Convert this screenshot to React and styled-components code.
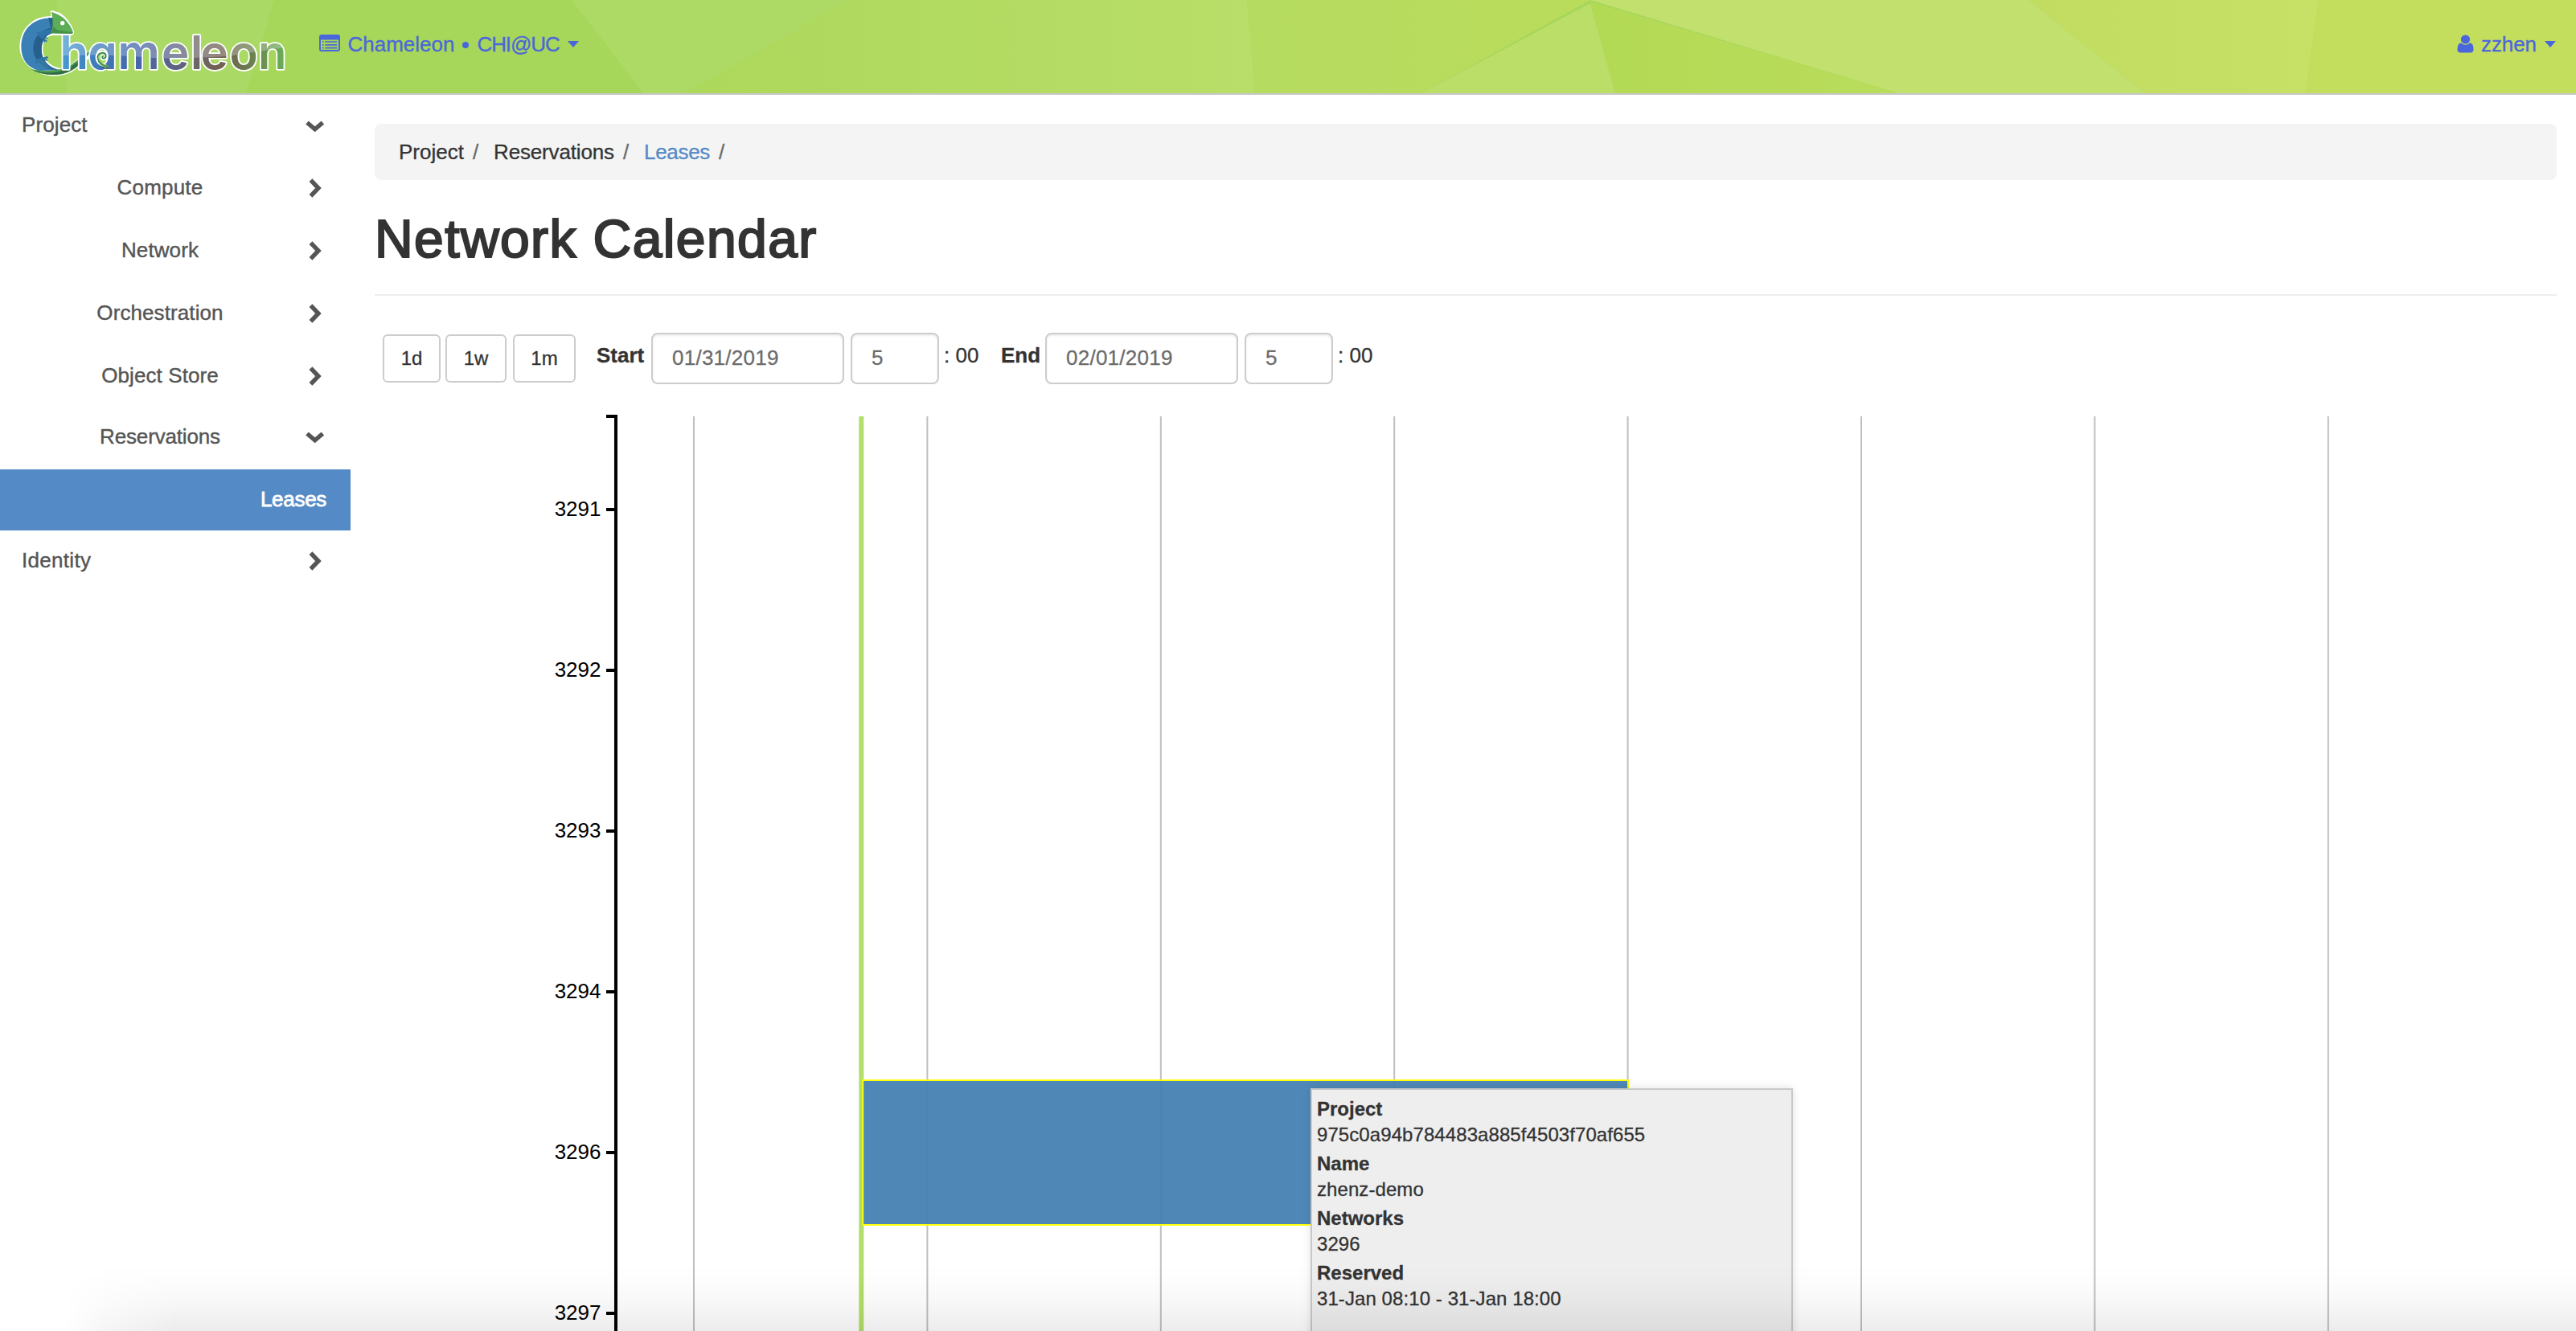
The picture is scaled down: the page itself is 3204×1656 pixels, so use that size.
import React from "react";
import styled, { createGlobalStyle } from "styled-components";

const GlobalStyle = createGlobalStyle`
  * { box-sizing: border-box; }
  html, body { margin: 0; padding: 0; background: #fff; }
  body {
    overflow: hidden;
    font-family: "Liberation Sans", Arial, sans-serif;
    font-size: 26px;
    color: #333;
    -webkit-text-stroke: 0.3px currentColor;
  }
`;

const Page = styled.div`
  position: relative;
  display: flex;
  flex-direction: column;
  width: 3204px;
  height: 1656px;
  overflow: hidden;
`;

const Header = styled.header`
  position: relative;
  display: flex;
  flex: none;
  justify-content: space-between;
  height: 118px;
  border-bottom: 2px solid #c8c8c8;
  color: #4a66dc;
`;

const HeaderArt = styled.svg`
  position: absolute;
  inset: 0;
  width: 3204px;
  height: 116px;
`;

const HeaderGroup = styled.div`
  position: relative;
  display: flex;
  align-items: flex-start;
`;

const LogoArt = styled.svg`
  display: block;
  width: 380px;
  height: 116px;
  -webkit-text-stroke: 0;
`;

const NavItem = styled.div`
  display: flex;
  align-items: flex-start;
  height: 30px;
  line-height: 30px;
  margin-top: 40px;
  margin-left: ${(p) => p.$left || 0}px;
  margin-right: ${(p) => p.$right || 0}px;
`;

const NavText = styled.span`
  width: ${(p) => p.$w}px;
  margin-left: ${(p) => p.$gap}px;
  letter-spacing: ${(p) => p.$ls || 0}px;
  white-space: nowrap;
`;

const NavIcon = styled.svg`
  display: block;
  flex: none;
  margin-top: 3px;
`;

const Bullet = styled.span`
  width: 8px;
  height: 8px;
  margin: 12px 1px 0 10px;
  border-radius: 50%;
  background: currentColor;
`;

const Caret = styled.span`
  width: 0;
  height: 0;
  margin: 11px 0 0 ${(p) => p.$gap}px;
  border: 7.5px solid transparent;
  border-top: 8.5px solid currentColor;
  border-bottom: 0;
`;

const Columns = styled.div`
  display: flex;
  flex: 1;
  min-height: 0;
`;

const Sidebar = styled.nav`
  flex: none;
  width: 436px;
`;

const SideRow = styled.div`
  display: grid;
  grid-template-columns: 398px 38px;
  height: 76px;
  margin-top: ${(p) => p.$gap || 0}px;
  line-height: 74px;
  color: ${(p) => (p.$active ? "#fff" : "#555")};
  background: ${(p) => (p.$active ? "#548ac5" : "transparent")};
`;

const SideLabel = styled.span`
  padding-left: ${(p) => (p.$align === "left" ? 27 : 0)}px;
  margin-right: ${(p) => (p.$align === "right" ? -8 : 0)}px;
  text-align: ${(p) => p.$align};
  letter-spacing: ${(p) => p.$ls || 0}px;
  -webkit-text-stroke: ${(p) => (p.$align === "right" ? 0.8 : 0.4)}px currentColor;
`;

const ChevronBox = styled.svg`
  display: block;
  width: 26px;
  height: 26px;
  margin: ${(p) => p.$top}px 0 0 -19px;
`;

const Main = styled.main`
  display: flex;
  flex-direction: column;
  width: 2768px;
  padding: 36px 24px 0 30px;
`;

const Breadcrumb = styled.ol`
  display: flex;
  flex: none;
  height: 70px;
  margin: 0;
  padding: 0 30px;
  list-style: none;
  line-height: 70px;
  border-radius: 8px;
  background: #f4f4f4;
`;

const Crumb = styled.li`
  display: flex;
  width: ${(p) => p.$w}px;
  letter-spacing: ${(p) => p.$ls || 0}px;
  color: ${(p) => (p.$active ? "#548ac5" : "#333")};
  &::after {
    content: "/";
    padding-left: 11px;
    color: #6a6a6a;
  }
`;

const Title = styled.h1`
  flex: none;
  height: 142px;
  margin: 0;
  padding-top: 33px;
  font-size: 66px;
  line-height: 80px;
  font-weight: 400;
  letter-spacing: 1.4px;
  -webkit-text-stroke: 2.2px #333;
`;

const Rule = styled.hr`
  flex: none;
  width: 100%;
  height: 2px;
  margin: 0;
  border: 0;
  background: #eee;
`;

const Controls = styled.form`
  display: flex;
  flex: none;
  align-items: flex-start;
  height: 134px;
  padding: 46px 0 0 10px;
`;

const RangeButton = styled.button`
  width: ${(p) => p.$w}px;
  height: 60px;
  margin: 2px ${(p) => p.$gap}px 0 0;
  padding: 0;
  border: 2px solid #ccc;
  border-radius: 6px;
  background: #fff;
  font: 24px/54px "Liberation Sans", Arial, sans-serif;
  color: #333;
`;

const Label = styled.label`
  width: ${(p) => p.$w}px;
  line-height: 57px;
  font-weight: 700;
`;

const Field = styled.input`
  width: ${(p) => p.$w}px;
  height: 64px;
  margin-right: 8px;
  padding: 0 24px 2px;
  border: 2px solid #ccc;
  border-radius: 8px;
  background: #fff;
  box-shadow: inset 0 2px 3px rgba(0, 0, 0, 0.075);
  font: 26px/58px "Liberation Sans", Arial, sans-serif;
  letter-spacing: 0.25px;
  color: #6c6c6c;
`;

const Minutes = styled.span`
  width: ${(p) => p.$w}px;
  margin-left: -2px;
  line-height: 57px;
`;

const Chart = styled.svg`
  display: block;
  flex: none;
  width: 2714px;
  height: 1154px;
  text { font: 26px "Liberation Sans", Arial, sans-serif; fill: #000; }
`;

const Tooltip = styled.dl`
  position: absolute;
  left: 1630px;
  top: 1354px;
  width: 600px;
  height: 340px;
  margin: 0;
  padding: 8px 6px;
  border: 2px solid #c8c8c8;
  background: #eee;
  box-shadow: 0 0 10px rgba(0, 0, 0, 0.12);
  font-size: 24px;
  line-height: 32px;
`;

const Term = styled.dt`
  margin-top: ${(p) => (p.$first ? 0 : 4)}px;
  font-weight: 700;
`;

const Detail = styled.dd`
  margin: 0;
  letter-spacing: 0.08px;
`;

const BottomShade = styled.div`
  position: absolute;
  left: 0;
  right: 0;
  bottom: 0;
  height: 84px;
  background: linear-gradient(rgba(0,0,0,0), rgba(0,0,0,0.008) 25%, rgba(0,0,0,0.03) 60%, rgba(0,0,0,0.075));
  mask-image: linear-gradient(90deg, transparent 80px, rgba(0,0,0,.5) 130px, #000 220px);
  pointer-events: none;
`;

const FACETS = [
  ["0,0 341,0 306,116 0,116", "#abd966"],
  ["0,0 70,0 84,116 0,116", "#a5d75f"],
  ["711,0 1056,0 852,116 800,116", "#add965"],
  ["1056,0 1551,0 1561,116 852,116", "url(#facetA)"],
  ["1551,0 1978,0 1768,116 1561,116", "url(#facetB)"],
  ["1978,4 1768,116 2009,116", "#bbde69"],
  ["1978,2 2009,116 2361,116", "url(#facetD)"],
  ["1978,0 2523,0 2668,116 2361,116", "#c2e06d"],
  ["2523,0 2884,0 2868,116 2668,116", "url(#facetC)"],
  ["2884,0 3204,0 3204,116 2868,116", "#c3de5c"],
];

function HeaderBackdrop() {
  return (
    <HeaderArt viewBox="0 0 3204 116" preserveAspectRatio="none">
      <defs>
        <linearGradient id="facetA">
          <stop offset="0" stopColor="#acd85b" />
          <stop offset="1" stopColor="#b9de69" />
        </linearGradient>
        <linearGradient id="facetB">
          <stop offset="0" stopColor="#b5db60" />
          <stop offset="1" stopColor="#badc5b" />
        </linearGradient>
        <linearGradient id="facetC">
          <stop offset="0" stopColor="#c1dc60" />
          <stop offset="1" stopColor="#c6e166" />
        </linearGradient>
        <linearGradient id="facetD">
          <stop offset="0" stopColor="#b3da54" />
          <stop offset="1" stopColor="#b9dc5c" />
        </linearGradient>
      </defs>
      <rect width="3204" height="116" fill="#a6d65a" />
      {FACETS.map(([points, fill]) => (
        <polygon key={points} points={points} fill={fill} />
      ))}
    </HeaderArt>
  );
}

const WORDMARK = {
  x: "74.5 109.5 146.5 201 237 249.5 285.5 321",
  y: "86.3",
  fontFamily: "Inter, Lato, sans-serif",
  fontWeight: 600,
  fontSize: 58,
  style: { fontFeatureSettings: '"cv11"' },
};

function Logo() {
  return (
    <LogoArt viewBox="0 0 380 116">
      <defs>
        <linearGradient id="word" gradientUnits="userSpaceOnUse" x1="77" y1="0" x2="354" y2="0">
          <stop offset="0" stopColor="#4799cf" />
          <stop offset="0.17" stopColor="#3d79b8" />
          <stop offset="0.33" stopColor="#4668ab" />
          <stop offset="0.5" stopColor="#5b6285" />
          <stop offset="0.61" stopColor="#6b6666" />
          <stop offset="0.7" stopColor="#745f55" />
          <stop offset="0.82" stopColor="#6b774e" />
          <stop offset="1" stopColor="#6aae56" />
        </linearGradient>
        <clipPath id="wordClip">
          <text {...WORDMARK}>hameleon</text>
        </clipPath>
      </defs>
      <g transform="scale(.33333)">
        <g fill="#fff" stroke="#fff" strokeWidth="10" strokeLinejoin="round">
          <path d="M197 65C120 62 78 115 78 175C78 228 125 270 185 278C220 281 245 276 268 262L232 260C185 256 155 225 155 185C155 150 170 130 197 126L262 127Q273 127 271 118Q255 75 222 53L193 44Z" />
          <path d="M250 258L290 226L338 192L344 200L296 243L262 266Z" />
        </g>
        <path d="M197 67C120 64 79 115 79 175C79 222 104 254 145 264L232 262C185 256 155 225 155 185C155 150 170 130 200 122Z" fill="#3a80b5" />
        <path d="M180 67L199 67L199 122C170 130 156 150 155 185C155 225 180 250 215 261L185 258C145 240 124 215 124 180C124 140 150 112 190 104Z" fill="#265f8c" />
        <path d="M145 120Q165 112 197 108L197 122Q165 130 158 145Q142 138 145 120Z" fill="#2e74aa" />
        <path d="M140 122Q145 138 163 143L166 156M163 143L176 142M163 146L174 154" fill="none" stroke="#2f72a6" strokeWidth="5" strokeLinecap="round" />
        <path d="M136 232Q145 216 162 218L176 214M162 220L174 224" fill="none" stroke="#2f72a6" strokeWidth="7" strokeLinecap="round" />
        <path d="M130 222Q155 215 168 232Q180 252 205 260L165 250Z" fill="#34789f" />
        <path d="M192 44Q218 52 236 66Q263 92 272 118Q273 126 264 126L190 124Q203 90 192 44Z" fill="#5bae56" />
        <path d="M201 98Q208 112 225 114Q250 119 272 120Q273 126 264 126L190 124Z" fill="#479047" />
        <circle cx="233" cy="86" r="8" fill="#fff" />
        <path d="M110 256Q140 266 175 264Q225 262 255 250L292 222Q318 198 345 186Q330 205 300 238Q275 266 235 276Q190 284 150 272Q128 266 110 256Z" fill="#4d9a50" />
        <path d="M122 262Q160 275 205 270Q240 266 265 250L298 228L290 244Q265 268 228 277Q185 283 150 273Q132 268 122 262Z" fill="#2f6e45" />
      </g>
      <text {...WORDMARK} fill="#fff" stroke="#fff" strokeWidth="3.6" strokeLinejoin="round">hameleon</text>
      <text {...WORDMARK} fill="url(#word)">hameleon</text>
      <path clipPath="url(#wordClip)" fill="#fff" opacity=".25" d="M60 30H370V57Q320 64 290 69Q230 74 190 72Q130 66 60 70Z" />
      <g transform="scale(.33333)" fill="none" strokeLinecap="round">
        <path d="M362 232Q378 258 404 258L400 240Q385 245 374 232Z" fill="#24384f" />
        <path d="M396 247Q362 240 361 212Q363 194 384 194Q400 197 398 212Q394 224 382 219Q376 211 385 208" stroke="#fff" strokeWidth="11" />
        <path d="M400 248Q366 240 364 213Q367 197 384 197Q397 200 395 212Q391 221 383 217Q379 211 385 209" stroke="#2f8250" strokeWidth="5" />
        <path d="M402 249Q380 246 370 230" stroke="#4c9a4a" strokeWidth="8" />
      </g>
    </LogoArt>
  );
}

function ListIcon() {
  return (
    <NavIcon width="26" height="22" viewBox="0 0 26 22">
      <path fill="currentColor" fillRule="evenodd" d="M3 0H23Q26 0 26 3V18Q26 21 23 21H3Q0 21 0 18V3Q0 0 3 0ZM2 6.5V18Q2 19 3 19H23Q24 19 24 18V6.5Z" />
      <path stroke="currentColor" strokeWidth="1.7" d="M3.8 9H5.6M7.3 9H22.3M3.8 12.8H5.6M7.3 12.8H22.3M3.8 16.6H5.6M7.3 16.6H22.3" />
    </NavIcon>
  );
}

function UserIcon() {
  return (
    <NavIcon width="21" height="23" viewBox="0 0 21 23">
      <circle cx="10.5" cy="6" r="5.6" fill="currentColor" />
      <path fill="currentColor" d="M5 10.2Q7.3 12.8 10.5 12.8T16 10.2Q20.5 10.5 20.5 18.5Q20.5 22.6 16.8 22.6H4.2Q.5 22.6 .5 18.5Q.5 10.5 5 10.2Z" />
    </NavIcon>
  );
}

function Chevron({ open, top }) {
  return (
    <ChevronBox $top={top} viewBox="0 0 26 26">
      <path
        d={open ? "M3 8.5L12.7 16.7L22.4 8.5" : "M7.5 3.2L17 13L7.5 22.8"}
        fill="none"
        stroke="#555"
        strokeWidth="5.4"
      />
    </ChevronBox>
  );
}

const MENU = [
  { label: "Project", align: "left", open: true, top: 26, ls: 0.1 },
  { label: "Compute", align: "center", gap: 2, top: 25, ls: 0.2 },
  { label: "Network", align: "center", gap: 2, top: 25, ls: 0.1 },
  { label: "Orchestration", align: "center", gap: 2, top: 25, ls: 0.1 },
  { label: "Object Store", align: "center", gap: 2, top: 25, ls: 0.1 },
  { label: "Reservations", align: "center", open: true, top: 25, ls: -0.15 },
  { label: "Leases", align: "right", active: true, gap: 2, ls: -0.3 },
  { label: "Identity", align: "left", top: 25, ls: 0.3 },
];

const TICKS = [
  ["3291", 634],
  ["3292", 834],
  ["3293", 1034],
  ["3294", 1234],
  ["3296", 1434],
  ["3297", 1634],
];

const GRID = Array.from({ length: 8 }, (_, i) => 863 + i * 290.4);

const DETAILS = [
  ["Project", "975c0a94b784483a885f4503f70af655"],
  ["Name", "zhenz-demo"],
  ["Networks", "3296"],
  ["Reserved", "31-Jan 08:10 - 31-Jan 18:00"],
];

function Calendar() {
  return (
    <Chart viewBox="466 502 2714 1154">
      {GRID.map((x) => (
        <line key={x} x1={x} x2={x} y1="518" y2="1660" stroke="#bfbfbf" strokeWidth="2" />
      ))}
      <line x1="1071.3" x2="1071.3" y1="518" y2="1660" stroke="#b3de69" strokeWidth="6" />
      <rect x="1073.2" y="1344" width="951.8" height="180" fill="#4682b4" stroke="#ff0" strokeWidth="2" opacity=".95" />
      <path d="M754 518H766V1660" fill="none" stroke="#000" strokeWidth="4" />
      {TICKS.map(([name, y]) => (
        <g key={name}>
          <line x1="754" x2="766" y1={y} y2={y} stroke="#000" strokeWidth="4" />
          <text x="747.5" y={y + 8} textAnchor="end">{name}</text>
        </g>
      ))}
    </Chart>
  );
}

export default function App() {
  return (
    <Page>
      <GlobalStyle />
      <Header>
        <HeaderBackdrop />
        <HeaderGroup>
          <Logo />
          <NavItem $left={17}>
            <ListIcon />
            <NavText $gap={9.5} $w={132}>Chameleon</NavText>
            <Bullet />
            <NavText $gap={10} $w={103} $ls={-1.1}>CHI@UC</NavText>
            <Caret $gap={9.5} />
          </NavItem>
        </HeaderGroup>
        <HeaderGroup>
          <NavItem $right={25}>
            <UserIcon />
            <NavText $gap={9} $w={69} $ls={-0.1}>zzhen</NavText>
            <Caret $gap={10} />
          </NavItem>
        </HeaderGroup>
      </Header>
      <Columns>
        <Sidebar>
          {MENU.map((m) => (
            <SideRow key={m.label} $active={m.active} $gap={m.gap}>
              <SideLabel $align={m.align} $ls={m.ls}>{m.label}</SideLabel>
              {!m.active && <Chevron open={m.open} top={m.top} />}
            </SideRow>
          ))}
        </Sidebar>
        <Main>
          <Breadcrumb>
            <Crumb $w={118}>Project</Crumb>
            <Crumb $w={187} $ls={-0.15}>Reservations</Crumb>
            <Crumb $w={100} $active $ls={-0.3}>Leases</Crumb>
          </Breadcrumb>
          <Title>Network Calendar</Title>
          <Rule />
          <Controls>
            <RangeButton type="button" $w={72} $gap={6}>1d</RangeButton>
            <RangeButton type="button" $w={76} $gap={8}>1w</RangeButton>
            <RangeButton type="button" $w={78} $gap={26}>1m</RangeButton>
            <Label $w={68}>Start</Label>
            <Field $w={240} defaultValue="01/31/2019" />
            <Field $w={110} defaultValue="5" />
            <Minutes $w={71}>: 00</Minutes>
            <Label $w={55}>End</Label>
            <Field $w={240} defaultValue="02/01/2019" />
            <Field $w={110} defaultValue="5" />
            <Minutes $w={71}>: 00</Minutes>
          </Controls>
          <Calendar />
        </Main>
      </Columns>
      <Tooltip>
        {DETAILS.map(([term, detail], i) => (
          <React.Fragment key={term}>
            <Term $first={i === 0}>{term}</Term>
            <Detail>{detail}</Detail>
          </React.Fragment>
        ))}
      </Tooltip>
      <BottomShade />
    </Page>
  );
}
